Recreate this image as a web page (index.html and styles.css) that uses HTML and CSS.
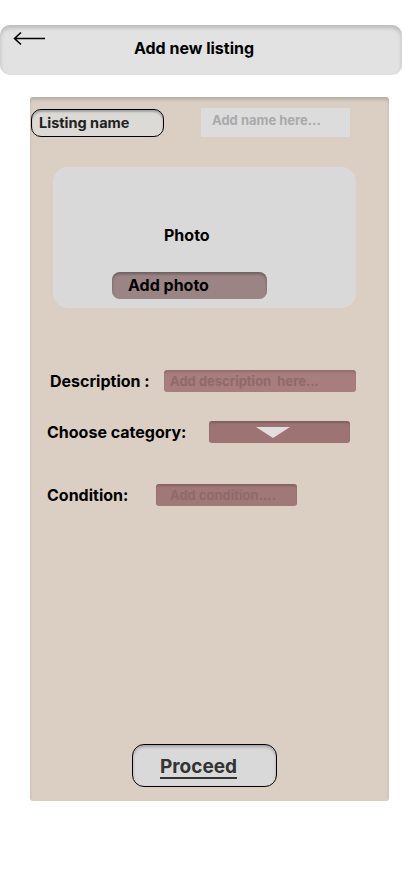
FILE: index.html
```html
<!DOCTYPE html>
<html>
<head>
<meta charset="utf-8">
<link rel="stylesheet" href="styles.css">
</head>
<body>
<header class="topbar">
  <svg class="back" width="34" height="16" viewBox="0 0 34 16"><path d="M33 7.5H3M9 1.5L2.5 7.5L9 13.5" fill="none" stroke="#000" stroke-width="1.6"/></svg>
  <h1 class="title">Add new listing</h1>
</header>
<main class="panel">
  <div class="name-row">
    <div class="pill">Listing name</div>
    <div class="name-input">Add name here...</div>
  </div>
  <div class="photo-box">
    <div class="photo-label">Photo</div>
    <div class="add-photo">Add photo</div>
  </div>
  <div class="field desc">
    <span class="label">Description :</span>
    <div class="pink-input">Add description&nbsp; here...</div>
  </div>
  <div class="field cat">
    <span class="label">Choose category:</span>
    <div class="pink-input dropdown"><span class="tri"></span></div>
  </div>
  <div class="field cond">
    <span class="label">Condition:</span>
    <div class="pink-input">Add condition....</div>
  </div>
  <div class="proceed">Proceed</div>
</main>
</body>
</html>
```
FILE: styles.css
```css
* { box-sizing: border-box; }
body {
  margin: 0;
  font-family: Inter, "Noto Sans", sans-serif;
  background: #fff;
  color: #000;
}
.topbar {
  margin-top: 25px;
  height: 50px;
  background: #e2e2e2;
  border-radius: 10px;
  box-shadow: inset 0 3px 4px rgba(0,0,0,0.18);
  display: flex;
  justify-content: center;
  align-items: center;
  position: relative;
}
.back {
  position: absolute;
  left: 12px;
  top: 6px;
}
.title {
  margin: 0;
  font-size: 16px;
  font-weight: 700;
  padding-right: 14px;
  padding-bottom: 4px;
}
.panel {
  margin: 22px 0 0 30px;
  width: 359px;
  height: 704px;
  background: #dbcfc4;
  border-radius: 3px;
  box-shadow: inset 0 3px 3px rgba(0,0,0,0.15);
  display: flex;
  flex-direction: column;
  padding-top: 11px;
}
.name-row {
  display: flex;
  align-items: center;
}
.pill {
  margin-left: 1px;
  width: 133px;
  height: 28px;
  border: 1px solid #000;
  border-radius: 10px;
  background: #dcdad7;
  box-shadow: inset 0 2px 2px rgba(0,0,0,0.25);
  font-size: 14.5px;
  font-weight: 700;
  color: #222;
  display: flex;
  align-items: center;
  padding-left: 7px;
}
.name-input {
  margin-left: 37px;
  width: 149px;
  height: 29px;
  background: #dcdcdc;
  font-size: 13px;
  font-weight: 700;
  color: #a9a9a9;
  padding: 4px 0 0 11px;
}
.photo-box {
  margin: 30px 0 0 23px;
  width: 303px;
  height: 141px;
  background: #d9d9d9;
  border-radius: 15px;
  padding-top: 58px;
}
.photo-label {
  margin-left: 111px;
  font-size: 16px;
  font-weight: 700;
  height: 20px;
}
.add-photo {
  margin: 27px 0 0 59px;
  width: 155px;
  height: 27px;
  border-radius: 8px;
  background: #9a8584;
  box-shadow: inset 0 2px 3px rgba(0,0,0,0.3);
  font-size: 16px;
  font-weight: 700;
  padding: 3px 0 0 16px;
}
.field {
  display: flex;
  align-items: center;
}
.label {
  font-size: 16px;
  font-weight: 700;
  flex: none;
}
.pink-input {
  height: 22px;
  background: #a87d7d;
  border-radius: 3px;
  box-shadow: inset 0 2px 2px rgba(0,0,0,0.12);
  font-size: 13px;
  font-weight: 700;
  color: #8f6a6a;
  padding: 3px 0 0 6px;
}
.desc { margin-top: 62px; padding-left: 20px; }
.desc .label { width: 114px; }
.desc .pink-input { width: 192px; }
.cat { margin-top: 29px; padding-left: 17px; }
.cat .label { width: 162px; }
.cat .pink-input { width: 141px; background: #9d7473; box-shadow: inset 0 2px 2px rgba(0,0,0,0.18); }
.dropdown { display: flex; padding: 6px 0 0 47px; }
.tri {
  width: 0; height: 0;
  border-left: 17px solid transparent;
  border-right: 17px solid transparent;
  border-top: 11px solid #e2dede;
}
.cond { margin-top: 41px; padding-left: 17px; }
.cond .label { width: 109px; }
.cond .pink-input { width: 141px; background: #a07877; padding-left: 14px; box-shadow: inset 0 2px 2px rgba(0,0,0,0.18); }
.proceed {
  margin: auto 0 14px 102px;
  width: 145px;
  height: 43px;
  border: 1px solid #000;
  border-radius: 12px;
  background: #d9d9d9;
  box-shadow: inset 0 2px 3px rgba(0,0,0,0.25);
  font-size: 19px;
  font-weight: 700;
  color: #333;
  text-decoration: underline;
  text-underline-offset: 4px;
  text-decoration-thickness: 1.5px;
  padding: 10px 0 0 27px;
}
```
